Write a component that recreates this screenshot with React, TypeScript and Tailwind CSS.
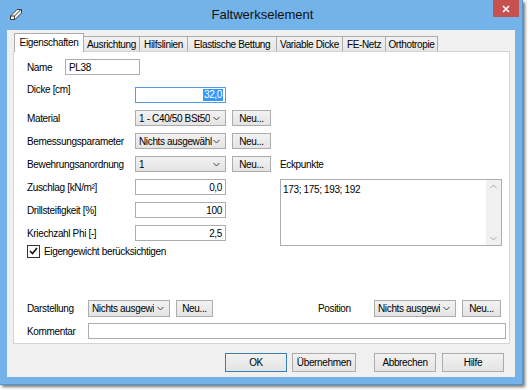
import React from "react";

const Chevron = () => (
  <svg width="7" height="5" viewBox="0 0 7 5" className="shrink-0">
    <path d="M0.5 1 L3.5 4 L6.5 1" fill="none" stroke="#404040" strokeWidth="1" />
  </svg>
);

function Combo({ className, text }: { className: string; text: string }) {
  return (
    <div
      className={`h-[16px] border border-[#acacac] bg-gradient-to-b from-[#f2f2f2] to-[#e4e4e4] flex items-center justify-between pl-[3px] pr-[5px] overflow-hidden whitespace-nowrap ${className}`}
    >
      <span className="overflow-hidden">{text}</span>
      <Chevron />
    </div>
  );
}

function Btn({ className, text, def }: { className: string; text: string; def?: boolean }) {
  return (
    <div
      className={`border ${def ? "border-[#3c7fb1]" : "border-[#acacac]"} bg-gradient-to-b from-[#f2f2f2] to-[#e4e4e4] flex items-center justify-center whitespace-nowrap ${className}`}
    >
      {text}
    </div>
  );
}

function TextBox({ className, text, right }: { className: string; text?: string; right?: boolean }) {
  return (
    <div
      className={`h-[16px] border border-[#abadb3] bg-white flex items-center px-[3px] whitespace-nowrap ${right ? "justify-end" : ""} ${className}`}
    >
      {text}
    </div>
  );
}

const tabs: { label: string; w: string }[] = [
  { label: "Ausrichtung", w: "w-[57px]" },
  { label: "Hilfslinien", w: "w-[49px]" },
  { label: "Elastische Bettung", w: "w-[90px]" },
  { label: "Variable Dicke", w: "w-[67px]" },
  { label: "FE-Netz", w: "w-[44px]" },
  { label: "Orthotropie", w: "w-[53px]" },
];

export default function App() {
  return (
    <div className="w-[530px] h-[390px] bg-white font-['Liberation_Sans',Arial,sans-serif] text-[10px] tracking-[-0.35px] text-black overflow-hidden">
      <div className="w-[523px] h-[385px] bg-[#74b3ea] flex flex-col shadow-[2px_2px_3px_rgba(0,0,0,0.55)] border-r border-b border-[#5a93c6]">
        {/* title bar */}
        <div className="h-[30px] flex items-start shrink-0">
          <div className="w-[30px] h-[30px] flex items-center justify-center pl-[2px] pb-[2px]">
            <svg width="14" height="13" viewBox="0 0 14 13">
              <path d="M1.5 11.5 L1.5 8 L8 1.5 L12.5 1.5 L12.5 5 L6 11.5 Z" fill="#f4f4f4" stroke="#3a3a3a" strokeWidth="1" />
              <path d="M1.5 8 L5.5 8 L12 1.5 M5.5 8 L5.5 11.5" fill="none" stroke="#3a3a3a" strokeWidth="1" />
            </svg>
          </div>
          <div className="flex-1 h-[30px] flex items-center justify-center text-[13px] tracking-[0px] text-[#111] pl-[6px]">
            Faltwerkselement
          </div>
          <div className="w-[26px] h-[17px] mr-[3px] ml-[4px] bg-[#c75050] flex items-center justify-center">
            <svg width="8" height="8" viewBox="0 0 8 8">
              <path d="M1 1 L7 7 M7 1 L1 7" stroke="#fff" strokeWidth="1.6" />
            </svg>
          </div>
        </div>
        {/* client */}
        <div className="mx-[7px] mb-[7px] flex-1 bg-[#f0f0f0] flex flex-col px-[6px] pt-[3px]">
          {/* tab strip */}
          <div className="h-[18px] flex items-end pl-[1px] shrink-0">
            <div className="w-[70px] h-[19px] -mb-px relative z-10 bg-white border border-b-0 border-[#acacac] flex items-center justify-center pb-[1px]">
              Eigenschaften
            </div>
            {tabs.map((t) => (
              <div
                key={t.label}
                className={`${t.w} h-[15px] -ml-px bg-gradient-to-b from-[#f2f2f2] to-[#e6e6e6] border border-b-0 border-[#acacac] flex items-center justify-center whitespace-nowrap`}
              >
                {t.label}
              </div>
            ))}
          </div>
          {/* panel */}
          <div className="h-[293px] w-[497px] bg-white border border-[#d4d4d4] flex flex-col pl-[13px] pt-[7px] pb-[4px]">
            <div className="grid grid-cols-[108px_91px_6px_39px_9px_222px] grid-rows-[21px_16px_16px_16px_16px_16px_16px_16px_6px] gap-y-[7px] items-center">
              {/* Name row */}
              <div className="col-span-6 self-start flex items-center h-[16px]">
                <span className="w-[38px]">Name</span>
                <TextBox className="w-[75px]" text="PL38" />
              </div>
              {/* Dicke */}
              <div className="self-start -mt-[5px]">Dicke [cm]</div>
              <div className="h-[16px] border border-[#569de5] bg-white flex items-center justify-end pr-[2px]">
                <span className="bg-[#3399ff] text-white px-[1px] leading-[12px]">32,0</span>
              </div>
              <div className="col-span-4" />
              {/* Material */}
              <div>Material</div>
              <Combo className="" text="1 - C40/50 BSt50" />
              <div />
              <Btn className="h-[16px]" text="Neu..." />
              <div className="col-span-2" />
              {/* Bemessung */}
              <div>Bemessungsparameter</div>
              <Combo className="" text="Nichts ausgewähl" />
              <div />
              <Btn className="h-[16px]" text="Neu..." />
              <div className="col-span-2" />
              {/* Bewehrung */}
              <div>Bewehrungsanordnung</div>
              <Combo className="" text="1" />
              <div />
              <Btn className="h-[16px]" text="Neu..." />
              <div />
              <div>Eckpunkte</div>
              {/* Zuschlag */}
              <div>Zuschlag [kN/m²]</div>
              <TextBox className="" right text="0,0" />
              <div className="col-span-3" />
              <div className="self-start row-span-3 h-[67px] border border-[#abadb3] bg-white flex">
                <div className="flex-1 px-[2px] pt-[2px]">173; 175; 193; 192</div>
                <div className="w-[15px] bg-[#f0f0f0] flex flex-col items-center justify-between py-[4px]">
                  <svg width="7" height="5" viewBox="0 0 7 5">
                    <path d="M0.5 4 L3.5 1 L6.5 4" fill="none" stroke="#a6a6a6" strokeWidth="1" />
                  </svg>
                  <svg width="7" height="5" viewBox="0 0 7 5">
                    <path d="M0.5 1 L3.5 4 L6.5 1" fill="none" stroke="#a6a6a6" strokeWidth="1" />
                  </svg>
                </div>
              </div>
              {/* Drill */}
              <div>Drillsteifigkeit [%]</div>
              <TextBox className="" right text="100" />
              <div className="col-span-3" />
              {/* Kriech */}
              <div>Kriechzahl Phi [-]</div>
              <TextBox className="" right text="2,5" />
              <div className="col-span-3" />
              {/* checkbox */}
              <div className="col-span-5 flex items-center gap-[4px] h-[13px]">
                <div className="w-[13px] h-[13px] border border-[#333] bg-white flex items-center justify-center">
                  <svg width="9" height="8" viewBox="0 0 9 8">
                    <path d="M1 4 L3.5 6.5 L8 1" fill="none" stroke="#111" strokeWidth="1.6" />
                  </svg>
                </div>
                <span>Eigengewicht berücksichtigen</span>
              </div>
            </div>
            <div className="flex-1" />
            {/* Darstellung row */}
            <div className="flex items-center h-[17px]">
              <span className="w-[61px]">Darstellung</span>
              <Combo className="w-[82px] h-[17px]" text="Nichts ausgewi" />
              <Btn className="w-[37px] h-[17px] ml-[6px]" text="Neu..." />
              <span className="ml-[105px] w-[56px]">Position</span>
              <Combo className="w-[82px] h-[17px]" text="Nichts ausgewi" />
              <Btn className="w-[39px] h-[17px] ml-[6px]" text="Neu..." />
            </div>
            <div className="flex items-center h-[16px] mt-[6px]">
              <span className="w-[61px]">Kommentar</span>
              <TextBox className="w-[418px]" />
            </div>
          </div>
          {/* buttons */}
          <div className="flex items-center mt-[9px] pl-[212px]">
            <Btn className="w-[62px] h-[19px]" text="OK" def />
            <Btn className="w-[64px] h-[19px] ml-[5px]" text="Übernehmen" />
            <Btn className="w-[62px] h-[19px] ml-[18px]" text="Abbrechen" />
            <Btn className="w-[62px] h-[19px] ml-[6px]" text="Hilfe" />
          </div>
        </div>
      </div>
    </div>
  );
}
